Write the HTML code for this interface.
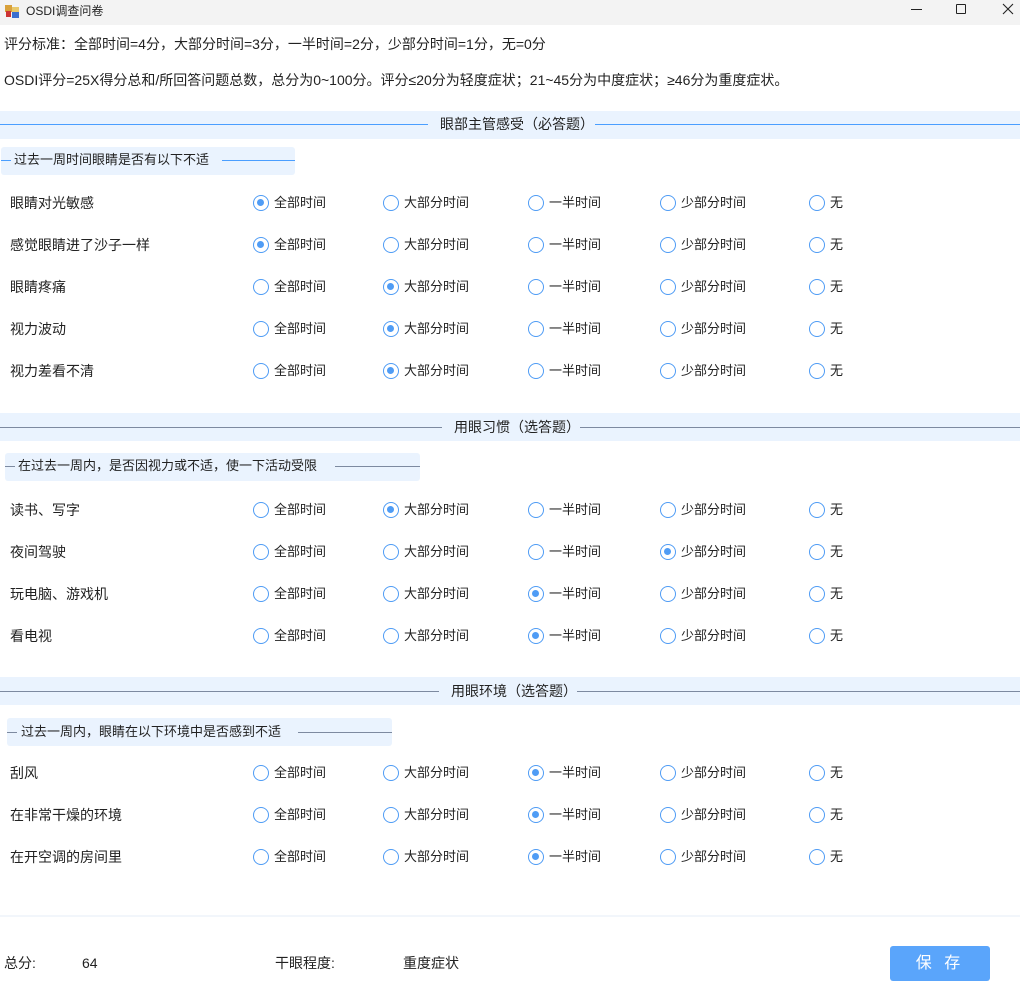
<!DOCTYPE html>
<html><head><meta charset="utf-8"><style>
*{margin:0;padding:0;box-sizing:border-box}
body{width:1020px;height:999px;background:#fff;position:relative;overflow:hidden;font-family:"Liberation Sans","Noto Sans CJK SC",sans-serif;font-size:13px;color:#222}
.a{position:absolute;white-space:nowrap;line-height:16px}
.b{font-size:14px}
.band{position:absolute;left:0;width:1020px;height:28px;background:#eaf3fe}
.ln{position:absolute;height:1px;background:#4a9eff}
.sub{position:absolute;height:28px;background:#eaf3fe;border-radius:3px}
.r{position:absolute;width:16px;height:16px;border:1.7px solid #4f9cf5;border-radius:50%;background:#fff}
.r.c::after{content:"";position:absolute;left:2.6px;top:2.6px;width:7.5px;height:7.5px;border-radius:50%;background:#4f9cf5}
</style></head><body>
<div style="position:absolute;left:0;top:0;width:1020px;height:25px;background:#f3f3f3"></div>
<svg class="a" style="left:5px;top:5px" width="15" height="14"><rect x="0" y="0" width="7" height="7" fill="#d9a13a"/><rect x="7" y="2" width="7" height="5" fill="#e8c86a"/><rect x="1" y="6" width="5" height="6" fill="#c33"/><rect x="7" y="7" width="7" height="6" fill="#3a6fd0"/></svg>
<div class="a" style="left:26px;top:3px;font-size:12px">OSDI调查问卷</div>
<div style="position:absolute;left:911px;top:9px;width:11px;height:1px;background:#222"></div>
<div style="position:absolute;left:956px;top:4px;width:10px;height:10px;border:1px solid #222;border-radius:1px"></div>
<svg style="position:absolute;left:1002px;top:3px" width="12" height="12"><path d="M1 1L11 11M11 1L1 11" stroke="#222" stroke-width="1.1"/></svg>
<div class="a b" style="left:4px;top:36px">评分标准：全部时间=4分，大部分时间=3分，一半时间=2分，少部分时间=1分，无=0分</div>
<div class="a b" style="left:4px;top:72px">OSDI评分=25X得分总和/所回答问题总数，总分为0~100分。评分≤20分为轻度症状；21~45分为中度症状；≥46分为重度症状。</div>

<div class="band" style="top:111px"></div>
<div class="ln" style="top:124px;left:0;width:428px"></div>
<div class="a b" style="left:440px;top:116px">眼部主管感受（必答题）</div>
<div class="ln" style="top:124px;left:595px;width:425px"></div>
<div class="sub" style="left:1px;top:147px;width:294px"></div>
<div class="ln" style="top:160px;left:1px;width:10px"></div>
<div class="a" style="left:14px;top:152px">过去一周时间眼睛是否有以下不适</div>
<div class="ln" style="top:160px;left:222px;width:73px"></div>

<div class="band" style="top:413px"></div>
<div class="ln" style="top:427px;left:0;width:442px;background:#7d8aa0"></div>
<div class="a b" style="left:454px;top:419px">用眼习惯（选答题）</div>
<div class="ln" style="top:427px;left:580px;width:440px;background:#7d8aa0"></div>
<div class="sub" style="left:5px;top:453px;width:415px"></div>
<div class="ln" style="top:466px;left:5px;width:10px;background:#7d8aa0"></div>
<div class="a" style="left:18px;top:458px">在过去一周内，是否因视力或不适，使一下活动受限</div>
<div class="ln" style="top:466px;left:335px;width:85px;background:#7d8aa0"></div>

<div class="band" style="top:677px"></div>
<div class="ln" style="top:691px;left:0;width:439px;background:#7d8aa0"></div>
<div class="a b" style="left:451px;top:683px">用眼环境（选答题）</div>
<div class="ln" style="top:691px;left:577px;width:443px;background:#7d8aa0"></div>
<div class="sub" style="left:7px;top:718px;width:385px"></div>
<div class="ln" style="top:732px;left:7px;width:10px;background:#7d8aa0"></div>
<div class="a" style="left:21px;top:724px">过去一周内，眼睛在以下环境中是否感到不适</div>
<div class="ln" style="top:732px;left:298px;width:94px;background:#7d8aa0"></div>

<div style="position:absolute;left:0;top:915px;width:1020px;height:2px;background:#f2f6fb"></div>

<div id="rows"></div>
<div class="a b" style="left:4px;top:955px">总分:</div>
<div class="a b" style="left:82px;top:955px">64</div>
<div class="a b" style="left:275px;top:955px">干眼程度:</div>
<div class="a b" style="left:403px;top:955px">重度症状</div>
<div style="position:absolute;left:890px;top:946px;width:100px;height:35px;background:#5aa5fb;border-radius:3px;color:#fff;font-size:16px;text-align:center;line-height:35px;letter-spacing:4px">保 存</div>
<script>
var rows=[["眼睛对光敏感",203,0],["感觉眼睛进了沙子一样",245,0],["眼睛疼痛",287,1],["视力波动",329,1],["视力差看不清",371,1],
["读书、写字",510,1],["夜间驾驶",552,3],["玩电脑、游戏机",594,2],["看电视",636,2],
["刮风",773,2],["在非常干燥的环境",815,2],["在开空调的房间里",857,2]];
var xs=[253,383,528,660,809],ts=["全部时间","大部分时间","一半时间","少部分时间","无"],h="";
rows.forEach(function(r){h+='<div class="a b" style="left:10px;top:'+(r[1]-8)+'px">'+r[0]+'</div>';
xs.forEach(function(x,i){h+='<div class="r'+(i==r[2]?' c':'')+'" style="left:'+x+'px;top:'+(r[1]-8)+'px"></div><div class="a" style="left:'+(x+21)+'px;top:'+(r[1]-8)+'px">'+ts[i]+'</div>';});});
document.getElementById("rows").innerHTML=h;
</script>
</body></html>
